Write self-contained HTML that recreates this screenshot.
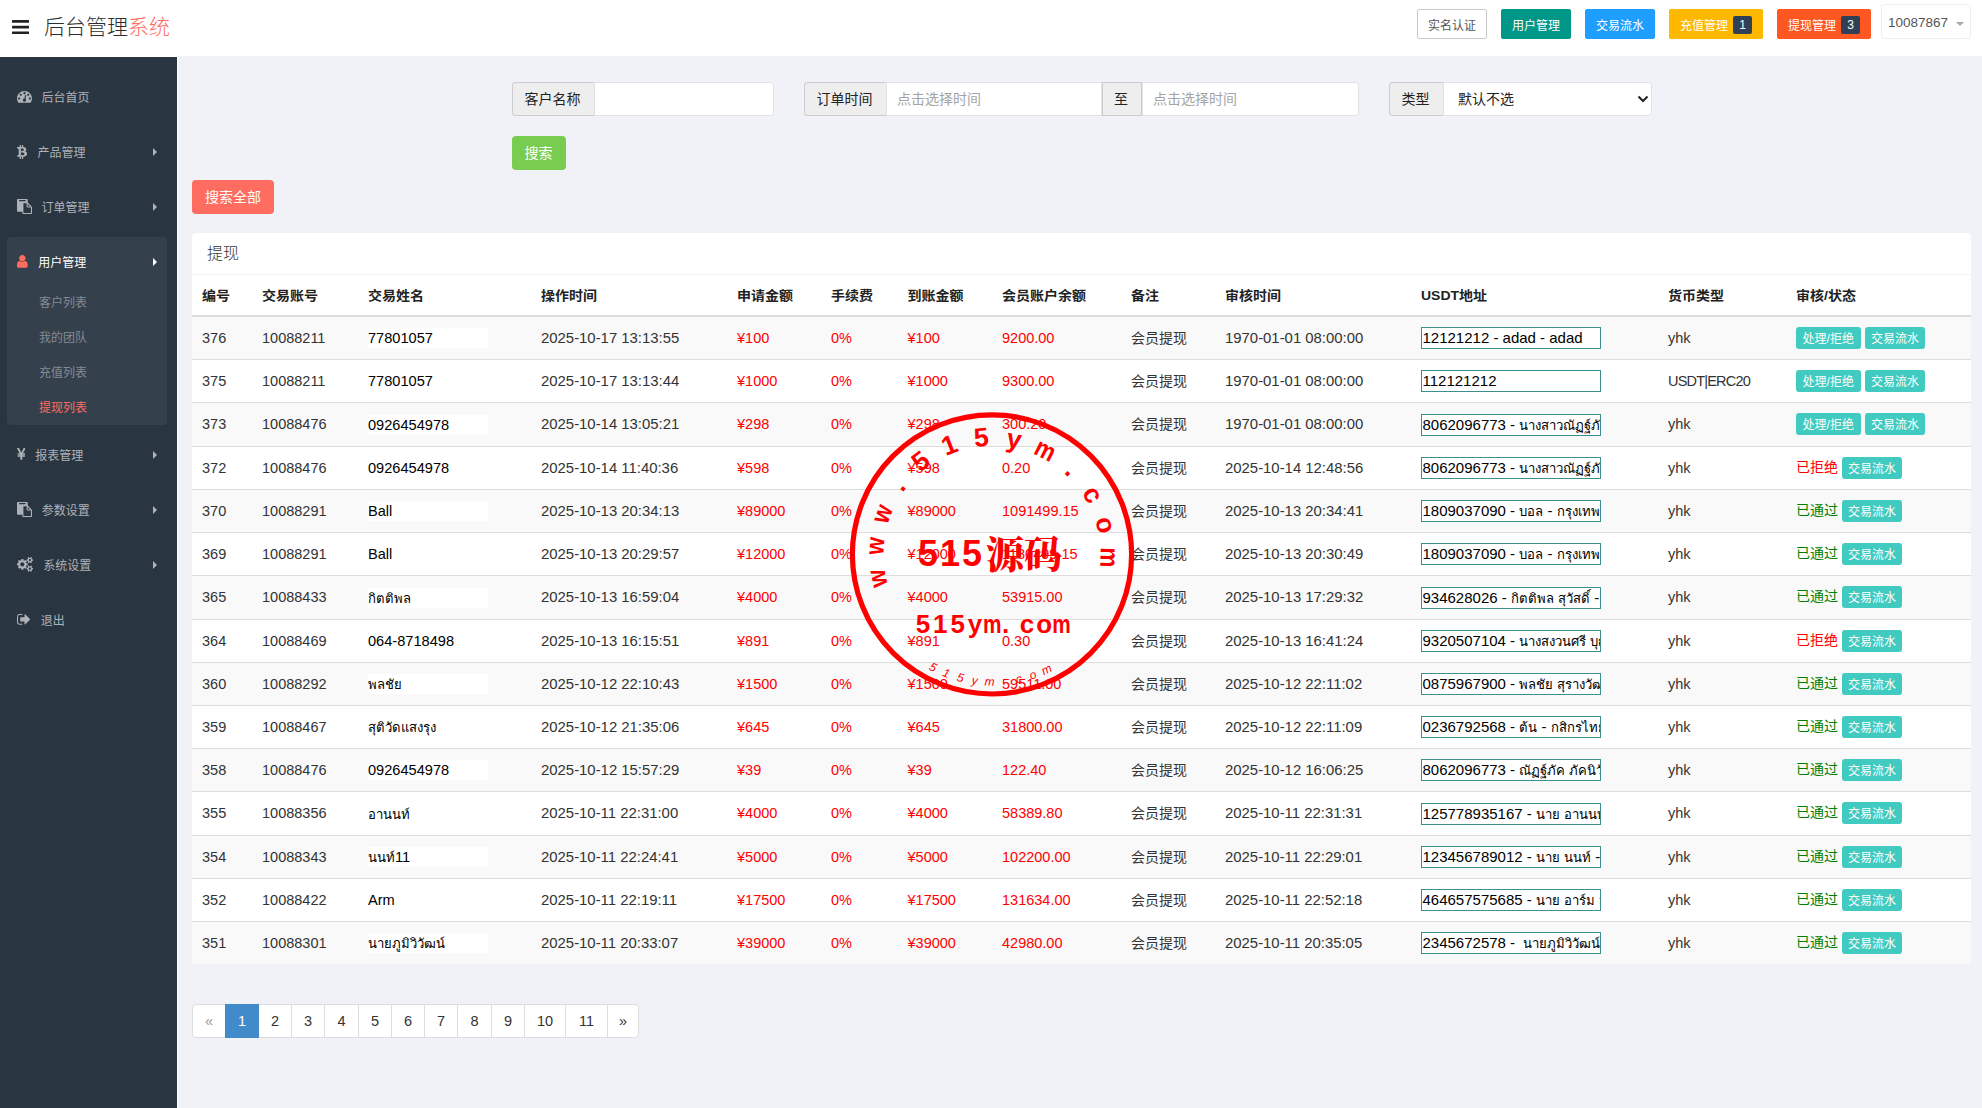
<!DOCTYPE html>
<html lang="zh-CN"><head><meta charset="utf-8"><title>后台管理系统</title>
<style>
*{box-sizing:border-box}
html,body{margin:0;padding:0}
body{width:1982px;height:1108px;overflow:hidden;position:relative;background:#f1f2f7;font-family:"Liberation Sans","Noto Sans CJK SC",sans-serif;color:#333;font-size:14px}
.abs{position:absolute}
.c{position:absolute;display:flex;align-items:center;white-space:nowrap;line-height:20px}
.hb{position:absolute;top:9px;height:30px;border-radius:2px;color:#fff;font-size:12px;display:flex;align-items:center;justify-content:center;white-space:nowrap}
.bdg{display:inline-flex;align-items:center;justify-content:center;width:19px;height:18px;background:#2f4056;border-radius:2px;color:#fff;font-size:12px;margin-left:5px;position:relative;top:1px}
.mi{position:absolute;font-size:12px;color:#aeb2b7;line-height:16px;height:16px;white-space:nowrap}
.arr{position:absolute;width:0;height:0;border-top:4px solid transparent;border-bottom:4px solid transparent;border-left:4.5px solid #aeb2b7}
.addon{position:absolute;top:82px;height:34px;padding:0 2px 2px 0;background:#eee;border:1px solid #ccc;display:flex;align-items:center;justify-content:center;font-size:14px;color:#222}
.inp{position:absolute;top:82px;height:34px;background:#fff;border:1px solid #e2e2e4;display:flex;align-items:center;font-size:14px;color:#a4a4a4;padding:0 0 2px 10px}
.th{position:absolute;top:285px;height:20px;line-height:20px;font-weight:bold;font-size:14px;color:#222;white-space:nowrap;transform:scaleY(.92);transform-origin:50% 55%}
.row{position:absolute;left:192px;width:1779px}
.row.odd{background:#f9f9f9}
.row .c{top:0;height:100%;padding-bottom:1px}
.n{font-size:14.5px;color:#333}
.r{color:#f00}
.nm{position:absolute;left:176px;width:120px;height:20px;background:#fff;color:#000;font-size:14.6px;line-height:21px;white-space:nowrap;overflow:hidden}
.us{position:absolute;left:1229px;width:180px;height:22px;background:#fff;border:1px solid #3b8f8f;color:#000;font-size:15px;line-height:20px;padding-left:0.5px;white-space:nowrap;overflow:hidden}
.t{font-size:13.1px}
.bx{display:inline-flex;align-items:center;justify-content:center;height:22px;border-radius:3px;background:#41cac0;color:#fff;font-size:12px;line-height:18px;padding-top:2px}
.pg{position:absolute;top:1004px;height:34px;border:1px solid #ddd;background:#fff;color:#333;font-size:14.5px;display:flex;align-items:center;justify-content:center}
</style></head><body>

<div class="abs" style="left:0;top:0;width:1982px;height:56px;background:#fff"></div>
<div class="abs" style="left:0;top:0;width:178px;height:1108px;background:#fff"></div>
<svg style="position:absolute;left:12.00px;top:19.71px" width="17.14" height="14.29" viewBox="0 -1280 1536 1280"><path fill="#222" transform="scale(1,-1)" d="M1536 192C1536 227 1507 256 1472 256H64C29 256 0 227 0 192V64C0 29 29 0 64 0H1472C1507 0 1536 29 1536 64ZM1536 704C1536 739 1507 768 1472 768H64C29 768 0 739 0 704V576C0 541 29 512 64 512H1472C1507 512 1536 541 1536 576ZM1536 1216C1536 1251 1507 1280 1472 1280H64C29 1280 0 1251 0 1216V1088C0 1053 29 1024 64 1024H1472C1507 1024 1536 1053 1536 1088Z"/></svg>
<div class="abs" style="left:44px;top:12px;height:30px;line-height:30px;font-size:21px;font-weight:300;color:#2e2e2e;white-space:nowrap">后台管理<span style="color:#ff6c60">系统</span></div>
<div class="hb" style="left:1417px;width:70px;background:#fff;border:1px solid #c9c9c9;color:#555">实名认证</div>
<div class="hb" style="left:1501px;width:70px;background:#009688">用户管理</div>
<div class="hb" style="left:1585px;width:70px;background:#1e9fff">交易流水</div>
<div class="hb" style="left:1669px;width:94px;background:#ffb800">充值管理<span class="bdg">1</span></div>
<div class="hb" style="left:1777px;width:94px;background:#ff5722">提现管理<span class="bdg">3</span></div>
<div class="abs" style="left:1881px;top:4px;width:90px;height:35px;border:1px solid #eee;border-radius:4px;background:#fff"></div>
<div class="abs" style="left:1888px;top:13px;height:20px;line-height:20px;font-size:13.5px;color:#555">10087867</div>
<div class="abs" style="left:1956px;top:22px;width:0;height:0;border-left:4px solid transparent;border-right:4px solid transparent;border-top:4px solid #a8a8a8"></div>
<div class="abs" style="left:0;top:57px;width:177px;height:1051px;background:#2a3542"></div>
<div class="abs" style="left:7px;top:237px;width:160px;height:188px;background:#35404d;border-radius:4px"></div>
<svg style="position:absolute;left:17.00px;top:91.29px" width="15.00" height="11.79" viewBox="0 -1280 1792 1408"><path fill="#aeb2b7" transform="scale(1,-1)" d="M384 384C384 313 327 256 256 256C185 256 128 313 128 384C128 455 185 512 256 512C327 512 384 455 384 384ZM576 832C576 761 519 704 448 704C377 704 320 761 320 832C320 903 377 960 448 960C519 960 576 903 576 832ZM1004 351C1069 306 1103 224 1082 143C1055 41 950 -21 847 6C745 33 683 138 710 241C732 322 801 377 880 383L981 765C990 799 1025 820 1059 811C1093 802 1113 767 1105 733ZM1664 384C1664 313 1607 256 1536 256C1465 256 1408 313 1408 384C1408 455 1465 512 1536 512C1607 512 1664 455 1664 384ZM1024 1024C1024 953 967 896 896 896C825 896 768 953 768 1024C768 1095 825 1152 896 1152C967 1152 1024 1095 1024 1024ZM1472 832C1472 761 1415 704 1344 704C1273 704 1216 761 1216 832C1216 903 1273 960 1344 960C1415 960 1472 903 1472 832ZM1792 384C1792 878 1390 1280 896 1280C402 1280 0 878 0 384C0 212 49 45 141 -99C153 -117 173 -128 195 -128H1597C1619 -128 1639 -117 1651 -99C1743 46 1792 212 1792 384Z"/></svg>
<div class="mi" style="left:41.4px;top:90.0px;color:#aeb2b7">后台首页</div>
<svg style="position:absolute;left:17.47px;top:145.21px" width="10.06" height="13.93" viewBox="56 -1408 1202.24 1664"><path fill="#aeb2b7" transform="scale(1,-1)" d="M1167 896C1150 1078 993 1139 795 1156V1408H641V1163C601 1163 560 1162 519 1161V1408H365V1156C332 1155 299 1155 268 1155L56 1156V992C169 994 167 992 167 992C230 992 250 956 256 924V637C260 637 266 637 272 636C267 636 261 636 256 636V234C253 214 241 183 198 183C198 183 200 181 87 183L56 0H256C293 0 329 -1 365 -1V-256H519V-4C561 -5 602 -5 641 -5V-256H795V-1C1053 13 1233 78 1256 321C1274 516 1182 603 1036 638C1124 683 1180 763 1167 896ZM952 351C952 160 626 182 522 182V520C626 520 952 549 952 351ZM881 827C881 654 609 674 522 674V981C609 981 881 1008 881 827Z"/></svg>
<div class="mi" style="left:37.4px;top:145.0px;color:#aeb2b7">产品管理</div>
<div class="arr" style="left:152.7px;top:147.8px;"></div>
<svg style="position:absolute;left:17.00px;top:199.14px" width="15.00" height="15.00" viewBox="0 -1536 1792 1792"><path fill="#aeb2b7" transform="scale(1,-1)" d="M768 -128V1024H1152V608C1152 555 1195 512 1248 512H1664V-128ZM1024 1312C1024 1295 1009 1280 992 1280H288C271 1280 256 1295 256 1312V1376C256 1393 271 1408 288 1408H992C1009 1408 1024 1393 1024 1376V1312ZM1280 640V939L1579 640ZM1792 512C1792 565 1762 638 1724 676L1316 1084C1305 1095 1293 1104 1280 1112V1440C1280 1493 1237 1536 1184 1536H96C43 1536 0 1493 0 1440V96C0 43 43 0 96 0H640V-160C640 -213 683 -256 736 -256H1696C1749 -256 1792 -213 1792 -160Z"/></svg>
<div class="mi" style="left:41.4px;top:200.0px;color:#aeb2b7">订单管理</div>
<div class="arr" style="left:152.7px;top:202.8px;"></div>
<svg style="position:absolute;left:17.00px;top:255.21px" width="10.71" height="12.86" viewBox="0 -1408 1280 1536"><path fill="#ff6c60" transform="scale(1,-1)" d="M1280 137C1280 400 1215 704 953 704C872 625 762 576 640 576C518 576 408 625 327 704C65 704 0 400 0 137C0 -9 96 -128 213 -128H1067C1184 -128 1280 -9 1280 137ZM1024 1024C1024 1236 852 1408 640 1408C428 1408 256 1236 256 1024C256 812 428 640 640 640C852 640 1024 812 1024 1024Z"/></svg>
<div class="mi" style="left:38.3px;top:255.0px;color:#fff">用户管理</div>
<div class="arr" style="left:152.7px;top:257.8px;border-left-color:#fff"></div>
<svg style="position:absolute;left:16.70px;top:448.21px" width="8.59" height="11.79" viewBox="0.25 -1408 1026.38 1408"><path fill="#aeb2b7" transform="scale(1,-1)" d="M603 0C620 0 635 14 635 32V362H925C943 362 957 376 957 394V497C957 515 943 529 925 529H635V614H925C943 614 957 628 957 646V750C957 767 943 782 925 782H710L1023 1361C1028 1371 1028 1383 1022 1392C1016 1402 1006 1408 995 1408H804C792 1408 780 1401 775 1389L584 969C565 925 543 883 526 840C510 878 494 918 470 965L255 1390C249 1401 238 1408 226 1408H32C21 1408 10 1402 4 1392C-1 1382 -1 1370 4 1360L325 782H111C93 782 79 767 79 750V646C79 628 93 614 111 614H399V529H111C93 529 79 515 79 497V394C79 376 93 362 111 362H399V32C399 14 413 0 431 0H603Z"/></svg>
<div class="mi" style="left:35.3px;top:448.0px;color:#aeb2b7">报表管理</div>
<div class="arr" style="left:152.7px;top:450.8px;"></div>
<svg style="position:absolute;left:16.70px;top:502.14px" width="15.00" height="15.00" viewBox="0 -1536 1792 1792"><path fill="#aeb2b7" transform="scale(1,-1)" d="M768 -128V1024H1152V608C1152 555 1195 512 1248 512H1664V-128ZM1024 1312C1024 1295 1009 1280 992 1280H288C271 1280 256 1295 256 1312V1376C256 1393 271 1408 288 1408H992C1009 1408 1024 1393 1024 1376V1312ZM1280 640V939L1579 640ZM1792 512C1792 565 1762 638 1724 676L1316 1084C1305 1095 1293 1104 1280 1112V1440C1280 1493 1237 1536 1184 1536H96C43 1536 0 1493 0 1440V96C0 43 43 0 96 0H640V-160C640 -213 683 -256 736 -256H1696C1749 -256 1792 -213 1792 -160Z"/></svg>
<div class="mi" style="left:41.7px;top:503.0px;color:#aeb2b7">参数设置</div>
<div class="arr" style="left:152.7px;top:505.8px;"></div>
<svg style="position:absolute;left:16.70px;top:557.28px" width="16.07" height="14.74" viewBox="0 -1520 1920 1761"><path fill="#aeb2b7" transform="scale(1,-1)" d="M896 640C896 499 781 384 640 384C499 384 384 499 384 640C384 781 499 896 640 896C781 896 896 781 896 640ZM1664 128C1664 58 1607 0 1536 0C1466 0 1408 57 1408 128C1408 198 1466 256 1536 256C1606 256 1664 198 1664 128ZM1664 1152C1664 1082 1607 1024 1536 1024C1466 1024 1408 1081 1408 1152C1408 1222 1466 1280 1536 1280C1606 1280 1664 1222 1664 1152ZM1280 731C1280 745 1270 758 1256 761L1104 784C1095 812 1083 839 1070 866C1098 905 1128 941 1157 980C1161 986 1164 992 1164 999C1164 1027 1046 1135 1020 1159C1014 1164 1007 1167 999 1167C992 1167 985 1165 979 1160L861 1071C837 1083 812 1094 786 1102L763 1255C761 1269 747 1280 733 1280H547C533 1280 521 1270 517 1256C504 1207 499 1152 494 1102C467 1093 442 1083 417 1070L302 1160C296 1164 289 1167 281 1167C252 1167 140 1046 120 1019C115 1013 113 1006 113 999C113 992 116 985 120 979C152 941 182 904 210 864C197 839 186 814 178 788L23 764C10 762 0 747 0 734V549C0 535 10 522 24 520L176 496C185 468 197 441 211 414C182 375 152 338 123 300C119 294 116 288 116 281C116 252 234 145 260 121C266 116 273 113 281 113C288 113 296 115 301 120L419 209C443 197 468 186 494 178L517 25C519 11 533 0 547 0H733C747 0 759 10 763 24C776 73 781 128 786 179C813 187 838 197 863 210L978 120C984 116 991 113 999 113C1028 113 1140 235 1160 262C1165 267 1167 274 1167 281C1167 289 1164 295 1160 301C1128 339 1098 376 1070 416C1083 441 1094 466 1102 492L1257 516C1270 518 1280 533 1280 546ZM1920 198C1920 213 1791 227 1771 229C1763 247 1753 265 1741 281C1750 301 1792 401 1792 419C1792 421 1791 424 1788 426C1776 433 1669 496 1664 496L1658 494C1624 460 1594 421 1566 382C1556 383 1546 384 1536 384C1526 384 1516 383 1506 382C1496 397 1421 496 1408 496C1403 496 1296 432 1284 426C1281 424 1280 421 1280 419C1280 402 1322 301 1331 281C1319 265 1309 247 1301 229C1281 227 1152 213 1152 198V58C1152 43 1281 29 1301 27C1309 8 1319 -9 1331 -25C1322 -45 1280 -146 1280 -163C1280 -165 1281 -168 1284 -170C1296 -177 1403 -241 1408 -241C1421 -241 1496 -141 1506 -126C1516 -127 1526 -128 1536 -128C1546 -128 1556 -127 1566 -126C1576 -141 1651 -241 1664 -241C1669 -241 1776 -177 1788 -170C1791 -168 1792 -166 1792 -163C1792 -145 1750 -45 1741 -25C1753 -9 1763 8 1771 27C1791 29 1920 43 1920 58ZM1920 1222C1920 1237 1791 1251 1771 1253C1763 1271 1753 1289 1741 1305C1750 1325 1792 1425 1792 1443C1792 1445 1791 1448 1788 1450C1776 1457 1669 1520 1664 1520L1658 1518C1624 1484 1594 1445 1566 1406C1556 1407 1546 1408 1536 1408C1526 1408 1516 1407 1506 1406C1496 1421 1421 1520 1408 1520C1403 1520 1296 1456 1284 1450C1281 1448 1280 1445 1280 1443C1280 1426 1322 1325 1331 1305C1319 1289 1309 1271 1301 1253C1281 1251 1152 1237 1152 1222V1082C1152 1067 1281 1053 1301 1051C1309 1032 1319 1015 1331 999C1322 979 1280 878 1280 861C1280 859 1281 856 1284 854C1296 847 1403 783 1408 783C1421 783 1496 883 1506 898C1516 897 1526 896 1536 896C1546 896 1556 897 1566 898C1576 883 1651 783 1664 783C1669 783 1776 847 1788 854C1791 856 1792 858 1792 861C1792 879 1750 979 1741 999C1753 1015 1763 1032 1771 1051C1791 1053 1920 1067 1920 1082Z"/></svg>
<div class="mi" style="left:43.3px;top:558.0px;color:#aeb2b7">系统设置</div>
<div class="arr" style="left:152.7px;top:560.8px;"></div>
<svg style="position:absolute;left:16.70px;top:614.29px" width="13.12" height="10.71" viewBox="0 -1280 1568 1280"><path fill="#aeb2b7" transform="scale(1,-1)" d="M640 96C640 133 601 128 576 128H288C200 128 128 200 128 288V992C128 1080 200 1152 288 1152H608C653 1152 640 1220 640 1248C640 1265 625 1280 608 1280H288C129 1280 0 1151 0 992V288C0 129 129 0 288 0H608C653 0 640 68 640 96ZM1568 640C1568 657 1561 673 1549 685L1005 1229C993 1241 977 1248 960 1248C925 1248 896 1219 896 1184V896H448C413 896 384 867 384 832V448C384 413 413 384 448 384H896V96C896 61 925 32 960 32C977 32 993 39 1005 51L1549 595C1561 607 1568 623 1568 640Z"/></svg>
<div class="mi" style="left:40.7px;top:613.0px;color:#aeb2b7">退出</div>
<div class="mi" style="left:39px;top:294.6px;color:#848b95">客户列表</div>
<div class="mi" style="left:39px;top:329.6px;color:#848b95">我的团队</div>
<div class="mi" style="left:39px;top:364.6px;color:#848b95">充值列表</div>
<div class="mi" style="left:39px;top:399.6px;color:#ff6c60">提现列表</div>
<div class="addon" style="left:512px;width:82px;border-radius:4px 0 0 4px;border-right:0">客户名称</div>
<div class="inp" style="left:594px;width:180px;border-radius:0 4px 4px 0"></div>
<div class="addon" style="left:804px;width:82px;border-radius:4px 0 0 4px;border-right:0">订单时间</div>
<div class="inp" style="left:886px;width:216px">点击选择时间</div>
<div class="addon" style="left:1102px;width:40px">至</div>
<div class="inp" style="left:1142px;width:217px;border-radius:0 4px 4px 0">点击选择时间</div>
<div class="addon" style="left:1389px;width:54px;border-radius:4px 0 0 4px;border-right:0">类型</div>
<div class="inp" style="left:1443px;width:209px;border-radius:0 4px 4px 0;color:#222;padding-left:14px">默认不选</div>
<svg class="abs" style="left:1637px;top:94px" width="12" height="10" viewBox="0 0 12 10"><path d="M1.5 2.5 L6 7 L10.5 2.5" fill="none" stroke="#222" stroke-width="2"/></svg>
<div class="abs" style="left:512px;top:136px;width:54px;height:34px;border-radius:4px;background:#78cd51;color:#fff;font-size:14px;display:flex;align-items:center;justify-content:center;padding:0 1px 2px 0">搜索</div>
<div class="abs" style="left:192px;top:180px;width:82px;height:34px;border-radius:4px;background:#ff6c60;color:#fff;font-size:14px;display:flex;align-items:center;justify-content:center;padding-bottom:2px">搜索全部</div>
<div class="abs" style="left:192px;top:233px;width:1779px;height:731px;background:#fff;border-radius:4px 4px 0 0"></div>
<div class="abs" style="left:207px;top:243px;height:22px;line-height:22px;font-size:16px;font-weight:300;color:#333">提现</div>
<div class="abs" style="left:192px;top:274px;width:1779px;height:1px;background:#eff2f7"></div>
<div class="th" style="left:202px">编号</div>
<div class="th" style="left:262px">交易账号</div>
<div class="th" style="left:368px">交易姓名</div>
<div class="th" style="left:541px">操作时间</div>
<div class="th" style="left:737px">申请金额</div>
<div class="th" style="left:831px">手续费</div>
<div class="th" style="left:907.5px">到账金额</div>
<div class="th" style="left:1002px">会员账户余额</div>
<div class="th" style="left:1131px">备注</div>
<div class="th" style="left:1225px">审核时间</div>
<div class="th" style="left:1421px">USDT地址</div>
<div class="th" style="left:1668px">货币类型</div>
<div class="th" style="left:1796px">审核/状态</div>
<div class="abs" style="left:192px;top:315px;width:1779px;height:2px;background:#ddd"></div>
<div class="row odd" style="top:317px;height:42px">
<div class="c n" style="left:10px;">376</div>
<div class="c n" style="left:70px;">10088211</div>
<div class="nm" style="top:11px">77801057</div>
<div class="c n" style="left:349px;font-size:14.9px">2025-10-17 13:13:55</div>
<div class="c n r" style="left:545px;">¥100</div>
<div class="c n r" style="left:639px;">0%</div>
<div class="c n r" style="left:715.5px;">¥100</div>
<div class="c n r" style="left:810px;">9200.00</div>
<div class="c n" style="left:939px;font-size:14px">会员提现</div>
<div class="c n" style="left:1033px;font-size:14.9px">1970-01-01 08:00:00</div>
<div class="us" style="top:10px">12121212 - adad - adad</div>
<div class="c n" style="left:1476px;">yhk</div>
<div class="c " style="left:1604px;"><span class="bx" style="width:64.5px">处理/拒绝</span><span class="bx" style="width:60px;margin-left:4.5px">交易流水</span></div>
</div>
<div class="abs" style="left:192px;top:359px;width:1779px;height:1px;background:#ddd"></div>
<div class="row" style="top:360px;height:42px">
<div class="c n" style="left:10px;">375</div>
<div class="c n" style="left:70px;">10088211</div>
<div class="nm" style="top:11px">77801057</div>
<div class="c n" style="left:349px;font-size:14.9px">2025-10-17 13:13:44</div>
<div class="c n r" style="left:545px;">¥1000</div>
<div class="c n r" style="left:639px;">0%</div>
<div class="c n r" style="left:715.5px;">¥1000</div>
<div class="c n r" style="left:810px;">9300.00</div>
<div class="c n" style="left:939px;font-size:14px">会员提现</div>
<div class="c n" style="left:1033px;font-size:14.9px">1970-01-01 08:00:00</div>
<div class="us" style="top:10px">112121212</div>
<div class="c n" style="left:1476px;letter-spacing:-0.8px">USDT|ERC20</div>
<div class="c " style="left:1604px;"><span class="bx" style="width:64.5px">处理/拒绝</span><span class="bx" style="width:60px;margin-left:4.5px">交易流水</span></div>
</div>
<div class="abs" style="left:192px;top:402px;width:1779px;height:1px;background:#ddd"></div>
<div class="row odd" style="top:403px;height:43px">
<div class="c n" style="left:10px;">373</div>
<div class="c n" style="left:70px;">10088476</div>
<div class="nm" style="top:12px">0926454978</div>
<div class="c n" style="left:349px;font-size:14.9px">2025-10-14 13:05:21</div>
<div class="c n r" style="left:545px;">¥298</div>
<div class="c n r" style="left:639px;">0%</div>
<div class="c n r" style="left:715.5px;">¥298</div>
<div class="c n r" style="left:810px;">300.20</div>
<div class="c n" style="left:939px;font-size:14px">会员提现</div>
<div class="c n" style="left:1033px;font-size:14.9px">1970-01-01 08:00:00</div>
<div class="us" style="top:10.5px">8062096773 - <span class="t">นางสาวณัฏฐ์ภัค</span></div>
<div class="c n" style="left:1476px;">yhk</div>
<div class="c " style="left:1604px;"><span class="bx" style="width:64.5px">处理/拒绝</span><span class="bx" style="width:60px;margin-left:4.5px">交易流水</span></div>
</div>
<div class="abs" style="left:192px;top:446px;width:1779px;height:1px;background:#ddd"></div>
<div class="row" style="top:447px;height:42px">
<div class="c n" style="left:10px;">372</div>
<div class="c n" style="left:70px;">10088476</div>
<div class="nm" style="top:11px">0926454978</div>
<div class="c n" style="left:349px;font-size:14.9px">2025-10-14 11:40:36</div>
<div class="c n r" style="left:545px;">¥598</div>
<div class="c n r" style="left:639px;">0%</div>
<div class="c n r" style="left:715.5px;">¥598</div>
<div class="c n r" style="left:810px;">0.20</div>
<div class="c n" style="left:939px;font-size:14px">会员提现</div>
<div class="c n" style="left:1033px;font-size:14.9px">2025-10-14 12:48:56</div>
<div class="us" style="top:10px">8062096773 - <span class="t">นางสาวณัฏฐ์ภัค</span></div>
<div class="c n" style="left:1476px;">yhk</div>
<div class="c " style="left:1604px;"><span style="color:#f00;font-size:14px;width:42px;position:relative;top:-1px">已拒绝</span><span class="bx" style="width:60px;margin-left:4px">交易流水</span></div>
</div>
<div class="abs" style="left:192px;top:489px;width:1779px;height:1px;background:#ddd"></div>
<div class="row odd" style="top:490px;height:42px">
<div class="c n" style="left:10px;">370</div>
<div class="c n" style="left:70px;">10088291</div>
<div class="nm" style="top:11px">Ball</div>
<div class="c n" style="left:349px;font-size:14.9px">2025-10-13 20:34:13</div>
<div class="c n r" style="left:545px;">¥89000</div>
<div class="c n r" style="left:639px;">0%</div>
<div class="c n r" style="left:715.5px;">¥89000</div>
<div class="c n r" style="left:810px;">1091499.15</div>
<div class="c n" style="left:939px;font-size:14px">会员提现</div>
<div class="c n" style="left:1033px;font-size:14.9px">2025-10-13 20:34:41</div>
<div class="us" style="top:10px">1809037090 - <span class="t">บอล</span> - <span class="t">กรุงเทพ</span></div>
<div class="c n" style="left:1476px;">yhk</div>
<div class="c " style="left:1604px;"><span style="color:#008000;font-size:14px;width:42px;position:relative;top:-1px">已通过</span><span class="bx" style="width:60px;margin-left:4px">交易流水</span></div>
</div>
<div class="abs" style="left:192px;top:532px;width:1779px;height:1px;background:#ddd"></div>
<div class="row" style="top:533px;height:42px">
<div class="c n" style="left:10px;">369</div>
<div class="c n" style="left:70px;">10088291</div>
<div class="nm" style="top:11px">Ball</div>
<div class="c n" style="left:349px;font-size:14.9px">2025-10-13 20:29:57</div>
<div class="c n r" style="left:545px;">¥12000</div>
<div class="c n r" style="left:639px;">0%</div>
<div class="c n r" style="left:715.5px;">¥12000</div>
<div class="c n r" style="left:810px;">1180499.15</div>
<div class="c n" style="left:939px;font-size:14px">会员提现</div>
<div class="c n" style="left:1033px;font-size:14.9px">2025-10-13 20:30:49</div>
<div class="us" style="top:10px">1809037090 - <span class="t">บอล</span> - <span class="t">กรุงเทพ</span></div>
<div class="c n" style="left:1476px;">yhk</div>
<div class="c " style="left:1604px;"><span style="color:#008000;font-size:14px;width:42px;position:relative;top:-1px">已通过</span><span class="bx" style="width:60px;margin-left:4px">交易流水</span></div>
</div>
<div class="abs" style="left:192px;top:575px;width:1779px;height:1px;background:#ddd"></div>
<div class="row odd" style="top:576px;height:43px">
<div class="c n" style="left:10px;">365</div>
<div class="c n" style="left:70px;">10088433</div>
<div class="nm" style="top:12px"><span class="t">กิตติพล</span></div>
<div class="c n" style="left:349px;font-size:14.9px">2025-10-13 16:59:04</div>
<div class="c n r" style="left:545px;">¥4000</div>
<div class="c n r" style="left:639px;">0%</div>
<div class="c n r" style="left:715.5px;">¥4000</div>
<div class="c n r" style="left:810px;">53915.00</div>
<div class="c n" style="left:939px;font-size:14px">会员提现</div>
<div class="c n" style="left:1033px;font-size:14.9px">2025-10-13 17:29:32</div>
<div class="us" style="top:10.5px">934628026 - <span class="t">กิตติพล</span> <span class="t">สุวัสดิ์</span> - <span class="t">กรุงไทย</span></div>
<div class="c n" style="left:1476px;">yhk</div>
<div class="c " style="left:1604px;"><span style="color:#008000;font-size:14px;width:42px;position:relative;top:-1px">已通过</span><span class="bx" style="width:60px;margin-left:4px">交易流水</span></div>
</div>
<div class="abs" style="left:192px;top:619px;width:1779px;height:1px;background:#ddd"></div>
<div class="row" style="top:620px;height:42px">
<div class="c n" style="left:10px;">364</div>
<div class="c n" style="left:70px;">10088469</div>
<div class="nm" style="top:11px">064-8718498</div>
<div class="c n" style="left:349px;font-size:14.9px">2025-10-13 16:15:51</div>
<div class="c n r" style="left:545px;">¥891</div>
<div class="c n r" style="left:639px;">0%</div>
<div class="c n r" style="left:715.5px;">¥891</div>
<div class="c n r" style="left:810px;">0.30</div>
<div class="c n" style="left:939px;font-size:14px">会员提现</div>
<div class="c n" style="left:1033px;font-size:14.9px">2025-10-13 16:41:24</div>
<div class="us" style="top:10px">9320507104 - <span class="t">นางสงวนศรี</span> <span class="t">บุญมา</span></div>
<div class="c n" style="left:1476px;">yhk</div>
<div class="c " style="left:1604px;"><span style="color:#f00;font-size:14px;width:42px;position:relative;top:-1px">已拒绝</span><span class="bx" style="width:60px;margin-left:4px">交易流水</span></div>
</div>
<div class="abs" style="left:192px;top:662px;width:1779px;height:1px;background:#ddd"></div>
<div class="row odd" style="top:663px;height:42px">
<div class="c n" style="left:10px;">360</div>
<div class="c n" style="left:70px;">10088292</div>
<div class="nm" style="top:11px"><span class="t">พลชัย</span></div>
<div class="c n" style="left:349px;font-size:14.9px">2025-10-12 22:10:43</div>
<div class="c n r" style="left:545px;">¥1500</div>
<div class="c n r" style="left:639px;">0%</div>
<div class="c n r" style="left:715.5px;">¥1500</div>
<div class="c n r" style="left:810px;">59511.00</div>
<div class="c n" style="left:939px;font-size:14px">会员提现</div>
<div class="c n" style="left:1033px;font-size:14.9px">2025-10-12 22:11:02</div>
<div class="us" style="top:10px">0875967900 - <span class="t">พลชัย</span> <span class="t">สุรางวัฒน์</span></div>
<div class="c n" style="left:1476px;">yhk</div>
<div class="c " style="left:1604px;"><span style="color:#008000;font-size:14px;width:42px;position:relative;top:-1px">已通过</span><span class="bx" style="width:60px;margin-left:4px">交易流水</span></div>
</div>
<div class="abs" style="left:192px;top:705px;width:1779px;height:1px;background:#ddd"></div>
<div class="row" style="top:706px;height:42px">
<div class="c n" style="left:10px;">359</div>
<div class="c n" style="left:70px;">10088467</div>
<div class="nm" style="top:11px"><span class="t">สุติวัดแสงรุง</span></div>
<div class="c n" style="left:349px;font-size:14.9px">2025-10-12 21:35:06</div>
<div class="c n r" style="left:545px;">¥645</div>
<div class="c n r" style="left:639px;">0%</div>
<div class="c n r" style="left:715.5px;">¥645</div>
<div class="c n r" style="left:810px;">31800.00</div>
<div class="c n" style="left:939px;font-size:14px">会员提现</div>
<div class="c n" style="left:1033px;font-size:14.9px">2025-10-12 22:11:09</div>
<div class="us" style="top:10px">0236792568 - <span class="t">ต้น</span> - <span class="t">กสิกรไทย</span></div>
<div class="c n" style="left:1476px;">yhk</div>
<div class="c " style="left:1604px;"><span style="color:#008000;font-size:14px;width:42px;position:relative;top:-1px">已通过</span><span class="bx" style="width:60px;margin-left:4px">交易流水</span></div>
</div>
<div class="abs" style="left:192px;top:748px;width:1779px;height:1px;background:#ddd"></div>
<div class="row odd" style="top:749px;height:42px">
<div class="c n" style="left:10px;">358</div>
<div class="c n" style="left:70px;">10088476</div>
<div class="nm" style="top:11px">0926454978</div>
<div class="c n" style="left:349px;font-size:14.9px">2025-10-12 15:57:29</div>
<div class="c n r" style="left:545px;">¥39</div>
<div class="c n r" style="left:639px;">0%</div>
<div class="c n r" style="left:715.5px;">¥39</div>
<div class="c n r" style="left:810px;">122.40</div>
<div class="c n" style="left:939px;font-size:14px">会员提现</div>
<div class="c n" style="left:1033px;font-size:14.9px">2025-10-12 16:06:25</div>
<div class="us" style="top:10px">8062096773 - <span class="t">ณัฏฐ์ภัค</span> <span class="t">ภัคนิวัฒน์</span></div>
<div class="c n" style="left:1476px;">yhk</div>
<div class="c " style="left:1604px;"><span style="color:#008000;font-size:14px;width:42px;position:relative;top:-1px">已通过</span><span class="bx" style="width:60px;margin-left:4px">交易流水</span></div>
</div>
<div class="abs" style="left:192px;top:791px;width:1779px;height:1px;background:#ddd"></div>
<div class="row" style="top:792px;height:43px">
<div class="c n" style="left:10px;">355</div>
<div class="c n" style="left:70px;">10088356</div>
<div class="nm" style="top:12px"><span class="t">อานนท์</span></div>
<div class="c n" style="left:349px;font-size:14.9px">2025-10-11 22:31:00</div>
<div class="c n r" style="left:545px;">¥4000</div>
<div class="c n r" style="left:639px;">0%</div>
<div class="c n r" style="left:715.5px;">¥4000</div>
<div class="c n r" style="left:810px;">58389.80</div>
<div class="c n" style="left:939px;font-size:14px">会员提现</div>
<div class="c n" style="left:1033px;font-size:14.9px">2025-10-11 22:31:31</div>
<div class="us" style="top:10.5px">125778935167 - <span class="t">นาย</span> <span class="t">อานนท์</span></div>
<div class="c n" style="left:1476px;">yhk</div>
<div class="c " style="left:1604px;"><span style="color:#008000;font-size:14px;width:42px;position:relative;top:-1px">已通过</span><span class="bx" style="width:60px;margin-left:4px">交易流水</span></div>
</div>
<div class="abs" style="left:192px;top:835px;width:1779px;height:1px;background:#ddd"></div>
<div class="row odd" style="top:836px;height:42px">
<div class="c n" style="left:10px;">354</div>
<div class="c n" style="left:70px;">10088343</div>
<div class="nm" style="top:11px"><span class="t">นนท์</span>11</div>
<div class="c n" style="left:349px;font-size:14.9px">2025-10-11 22:24:41</div>
<div class="c n r" style="left:545px;">¥5000</div>
<div class="c n r" style="left:639px;">0%</div>
<div class="c n r" style="left:715.5px;">¥5000</div>
<div class="c n r" style="left:810px;">102200.00</div>
<div class="c n" style="left:939px;font-size:14px">会员提现</div>
<div class="c n" style="left:1033px;font-size:14.9px">2025-10-11 22:29:01</div>
<div class="us" style="top:10px">123456789012 - <span class="t">นาย</span> <span class="t">นนท์</span> - <span class="t">กรุงไทย</span></div>
<div class="c n" style="left:1476px;">yhk</div>
<div class="c " style="left:1604px;"><span style="color:#008000;font-size:14px;width:42px;position:relative;top:-1px">已通过</span><span class="bx" style="width:60px;margin-left:4px">交易流水</span></div>
</div>
<div class="abs" style="left:192px;top:878px;width:1779px;height:1px;background:#ddd"></div>
<div class="row" style="top:879px;height:42px">
<div class="c n" style="left:10px;">352</div>
<div class="c n" style="left:70px;">10088422</div>
<div class="nm" style="top:11px">Arm</div>
<div class="c n" style="left:349px;font-size:14.9px">2025-10-11 22:19:11</div>
<div class="c n r" style="left:545px;">¥17500</div>
<div class="c n r" style="left:639px;">0%</div>
<div class="c n r" style="left:715.5px;">¥17500</div>
<div class="c n r" style="left:810px;">131634.00</div>
<div class="c n" style="left:939px;font-size:14px">会员提现</div>
<div class="c n" style="left:1033px;font-size:14.9px">2025-10-11 22:52:18</div>
<div class="us" style="top:10px">464657575685 - <span class="t">นาย</span> <span class="t">อาร์ม</span> <span class="t">มั่นคง</span></div>
<div class="c n" style="left:1476px;">yhk</div>
<div class="c " style="left:1604px;"><span style="color:#008000;font-size:14px;width:42px;position:relative;top:-1px">已通过</span><span class="bx" style="width:60px;margin-left:4px">交易流水</span></div>
</div>
<div class="abs" style="left:192px;top:921px;width:1779px;height:1px;background:#ddd"></div>
<div class="row odd" style="top:922px;height:42px">
<div class="c n" style="left:10px;">351</div>
<div class="c n" style="left:70px;">10088301</div>
<div class="nm" style="top:11px"><span class="t">นายภูมิวิวัฒน์</span></div>
<div class="c n" style="left:349px;font-size:14.9px">2025-10-11 20:33:07</div>
<div class="c n r" style="left:545px;">¥39000</div>
<div class="c n r" style="left:639px;">0%</div>
<div class="c n r" style="left:715.5px;">¥39000</div>
<div class="c n r" style="left:810px;">42980.00</div>
<div class="c n" style="left:939px;font-size:14px">会员提现</div>
<div class="c n" style="left:1033px;font-size:14.9px">2025-10-11 20:35:05</div>
<div class="us" style="top:10px">2345672578 - &nbsp;<span class="t">นายภูมิวิวัฒน์</span></div>
<div class="c n" style="left:1476px;">yhk</div>
<div class="c " style="left:1604px;"><span style="color:#008000;font-size:14px;width:42px;position:relative;top:-1px">已通过</span><span class="bx" style="width:60px;margin-left:4px">交易流水</span></div>
</div>
<div class="pg" style="left:192px;width:34px;border-radius:4px 0 0 4px;color:#999;">«</div>
<div class="pg" style="left:225px;width:34px;background:#428bca;border-color:#428bca;color:#fff;z-index:2;">1</div>
<div class="pg" style="left:258px;width:34px;">2</div>
<div class="pg" style="left:291px;width:34px;">3</div>
<div class="pg" style="left:324px;width:35px;">4</div>
<div class="pg" style="left:358px;width:34px;">5</div>
<div class="pg" style="left:391px;width:34px;">6</div>
<div class="pg" style="left:424px;width:34px;">7</div>
<div class="pg" style="left:457px;width:35px;">8</div>
<div class="pg" style="left:491px;width:34px;">9</div>
<div class="pg" style="left:524px;width:42px;">10</div>
<div class="pg" style="left:565px;width:43px;">11</div>
<div class="pg" style="left:607px;width:32px;border-radius:0 4px 4px 0;">»</div>
<svg class="abs" style="left:0;top:0;pointer-events:none" width="1982" height="1108" viewBox="0 0 1982 1108" fill="#f00" font-family='"Liberation Sans","Noto Sans CJK SC",sans-serif'><circle cx="992" cy="554.4" r="139.6" fill="none" stroke="#f00" stroke-width="5.2"/><text font-size="26.5" font-weight="bold" text-anchor="middle" transform="translate(992 554.4) rotate(-101.90) translate(0 -108.5) scale(0.85 1)">w</text><text font-size="26.5" font-weight="bold" text-anchor="middle" transform="translate(992 554.4) rotate(-85.78) translate(0 -108.5) scale(0.85 1)">w</text><text font-size="26.5" font-weight="bold" text-anchor="middle" transform="translate(992 554.4) rotate(-69.66) translate(0 -108.5) scale(0.85 1)">w</text><text font-size="26.5" font-weight="bold" text-anchor="middle" transform="translate(992 554.4) rotate(-53.54) translate(0 -108.5)">.</text><text font-size="26.5" font-weight="bold" text-anchor="middle" transform="translate(992 554.4) rotate(-37.42) translate(0 -108.5)">5</text><text font-size="26.5" font-weight="bold" text-anchor="middle" transform="translate(992 554.4) rotate(-21.30) translate(0 -108.5)">1</text><text font-size="26.5" font-weight="bold" text-anchor="middle" transform="translate(992 554.4) rotate(-5.18) translate(0 -108.5)">5</text><text font-size="26.5" font-weight="bold" text-anchor="middle" transform="translate(992 554.4) rotate(10.94) translate(0 -108.5)">y</text><text font-size="26.5" font-weight="bold" text-anchor="middle" transform="translate(992 554.4) rotate(27.06) translate(0 -108.5) scale(0.85 1)">m</text><text font-size="26.5" font-weight="bold" text-anchor="middle" transform="translate(992 554.4) rotate(43.18) translate(0 -108.5)">.</text><text font-size="26.5" font-weight="bold" text-anchor="middle" transform="translate(992 554.4) rotate(59.30) translate(0 -108.5)">c</text><text font-size="26.5" font-weight="bold" text-anchor="middle" transform="translate(992 554.4) rotate(75.42) translate(0 -108.5)">o</text><text font-size="26.5" font-weight="bold" text-anchor="middle" transform="translate(992 554.4) rotate(91.54) translate(0 -108.5) scale(0.85 1)">m</text><text font-size="36" font-weight="bold" text-anchor="middle" x="928.0" y="565.5">5</text><text font-size="36" font-weight="bold" text-anchor="middle" x="950.0" y="565.5">1</text><text font-size="36" font-weight="bold" text-anchor="middle" x="972.0" y="565.5">5</text><text font-size="38" font-weight="900" font-family='"Noto Serif CJK SC","Noto Sans CJK SC",serif' x="986" y="568">源码</text><text font-size="26" font-weight="bold" text-anchor="middle" x="922.95" y="633.4">5</text><text font-size="26" font-weight="bold" text-anchor="middle" x="940.28" y="633.4">1</text><text font-size="26" font-weight="bold" text-anchor="middle" x="957.61" y="633.4">5</text><text font-size="26" font-weight="bold" text-anchor="middle" x="974.94" y="633.4">y</text><text font-size="26" font-weight="bold" text-anchor="middle" transform="translate(992.27 633.4) scale(0.8 1)">m</text><text font-size="26" font-weight="bold" text-anchor="middle" x="1005.60" y="633.4">.</text><text font-size="26" font-weight="bold" text-anchor="middle" x="1026.93" y="633.4">c</text><text font-size="26" font-weight="bold" text-anchor="middle" x="1044.26" y="633.4">o</text><text font-size="26" font-weight="bold" text-anchor="middle" transform="translate(1061.59 633.4) scale(0.8 1)">m</text><text font-size="12" font-style="italic" text-anchor="middle" transform="translate(992 554.4) rotate(27.60) translate(0 131.3)">5</text><text font-size="12" font-style="italic" text-anchor="middle" transform="translate(992 554.4) rotate(20.98) translate(0 131.3)">1</text><text font-size="12" font-style="italic" text-anchor="middle" transform="translate(992 554.4) rotate(14.36) translate(0 131.3)">5</text><text font-size="12" font-style="italic" text-anchor="middle" transform="translate(992 554.4) rotate(7.74) translate(0 131.3)">y</text><text font-size="12" font-style="italic" text-anchor="middle" transform="translate(992 554.4) rotate(1.12) translate(0 131.3)">m</text><text font-size="12" font-style="italic" text-anchor="middle" transform="translate(992 554.4) rotate(-5.50) translate(0 131.3)">.</text><text font-size="12" font-style="italic" text-anchor="middle" transform="translate(992 554.4) rotate(-12.12) translate(0 131.3)">c</text><text font-size="12" font-style="italic" text-anchor="middle" transform="translate(992 554.4) rotate(-18.74) translate(0 131.3)">o</text><text font-size="12" font-style="italic" text-anchor="middle" transform="translate(992 554.4) rotate(-25.36) translate(0 131.3)">m</text></svg>
</body></html>
